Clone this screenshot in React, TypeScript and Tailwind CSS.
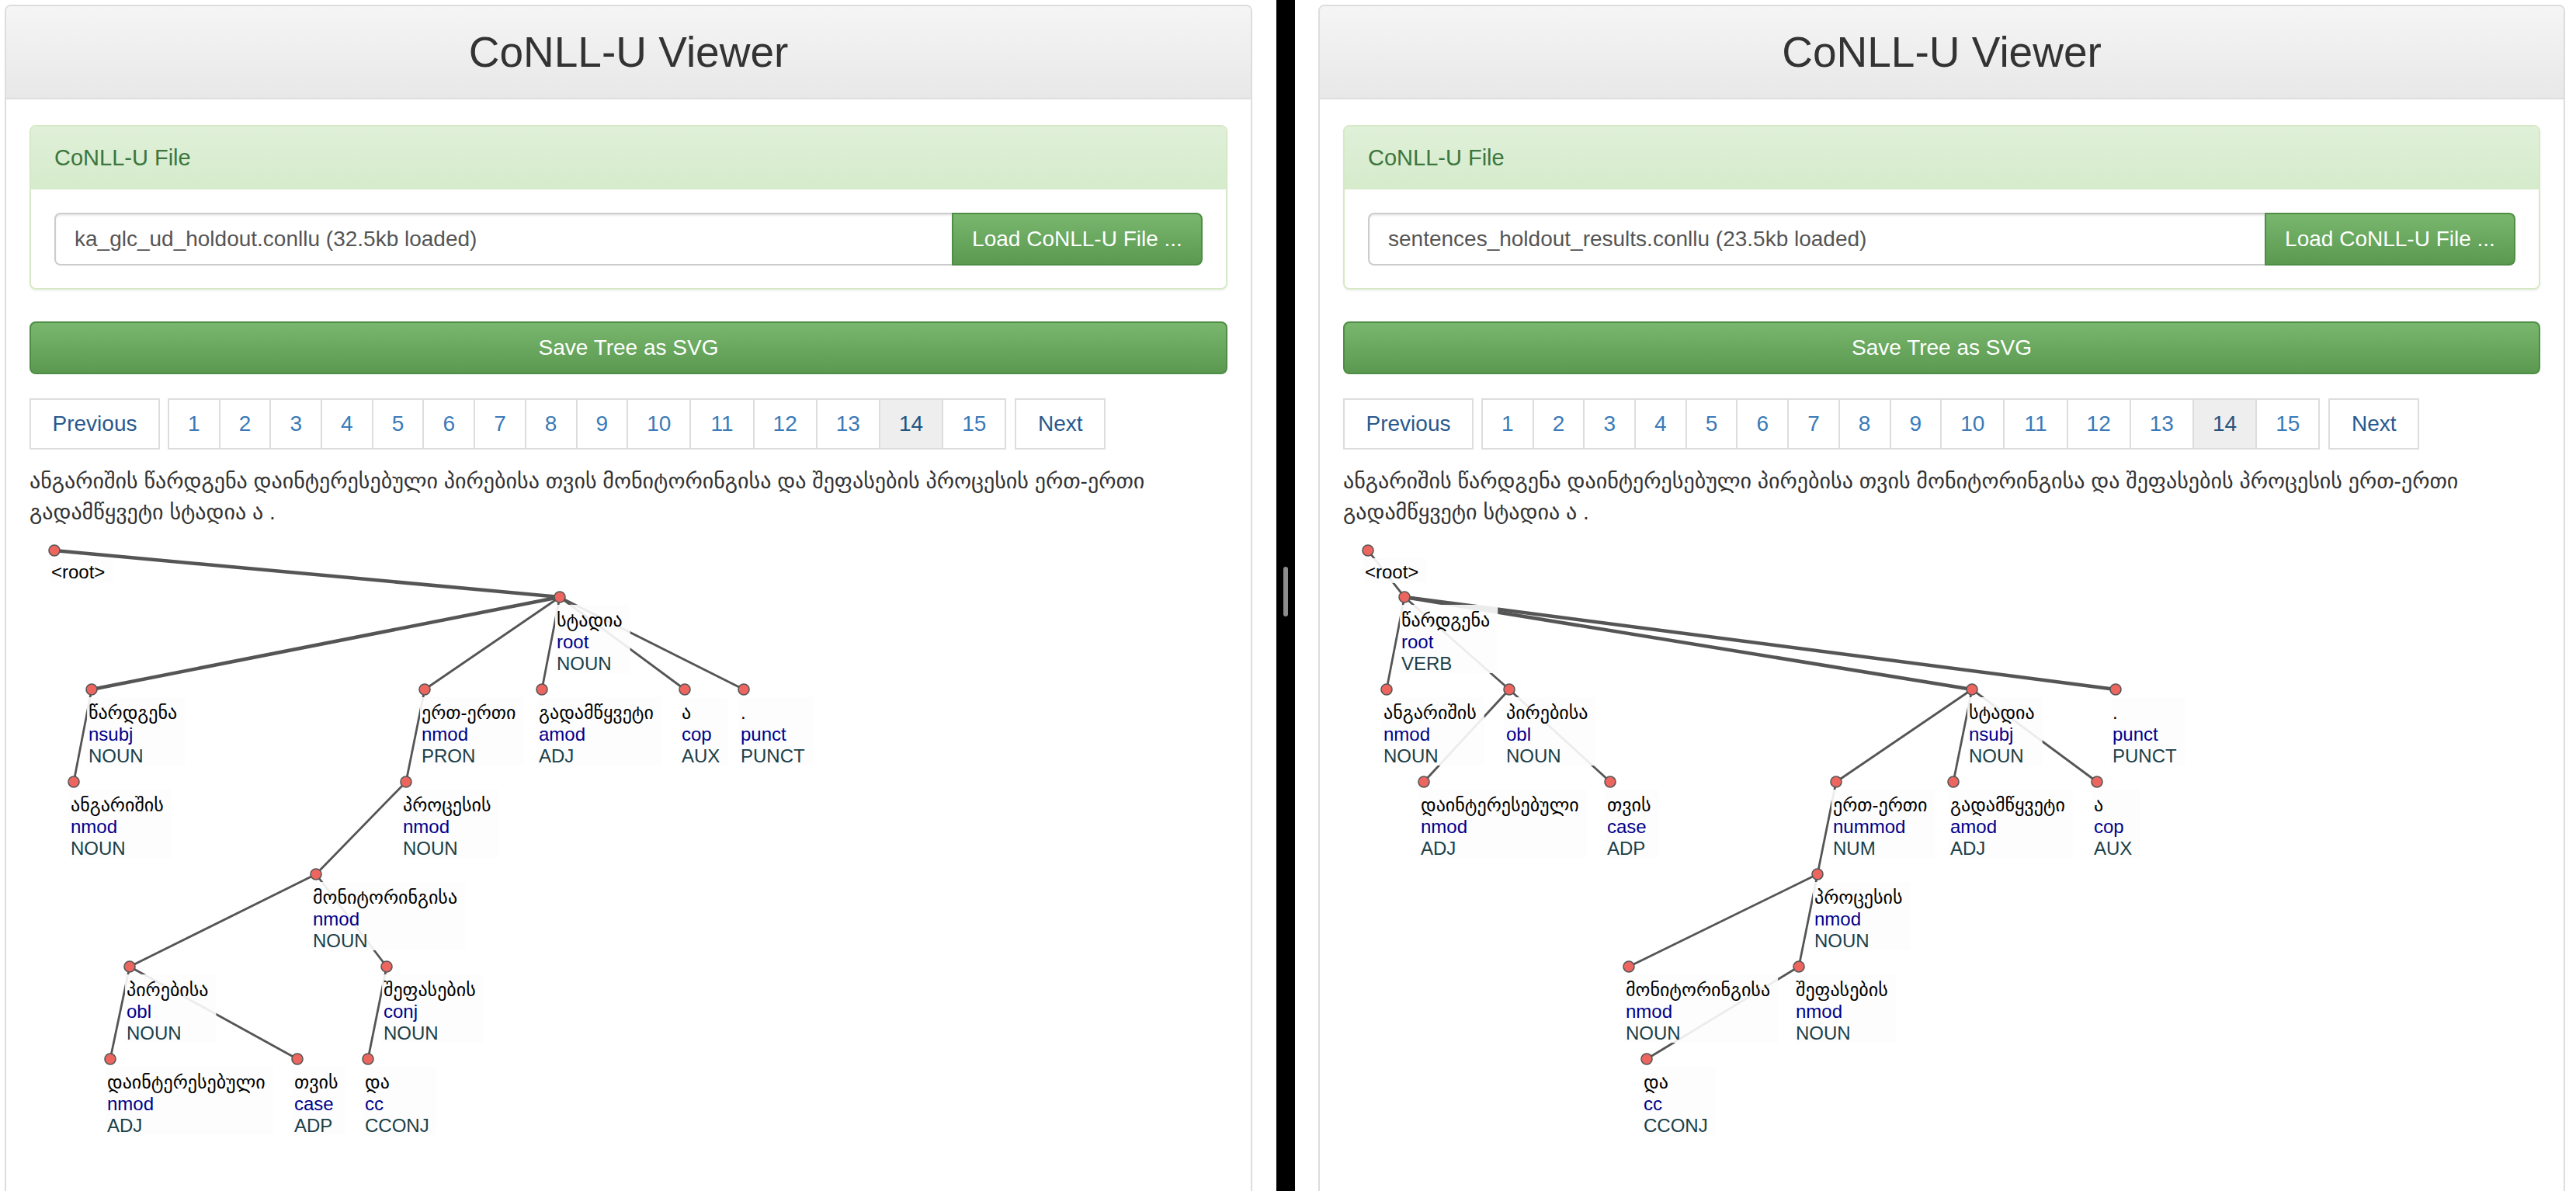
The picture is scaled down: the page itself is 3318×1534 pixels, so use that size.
import { useLayoutEffect, useRef, useState } from 'react'

type TreeNode = {
  id: string
  x: number
  y: number
  word: string
  deprel?: string
  upos?: string
}

type Edge = { from: string; to: string; thick?: boolean }

type ViewerData = {
  padLeft: string
  panelWidth: string
  fileName: string
  nodes: TreeNode[]
  edges: Edge[]
}

const sentenceLine1 =
  'ანგარიშის წარდგენა დაინტერესებული პირებისა თვის მონიტორინგისა და შეფასების პროცესის ერთ-ერთი'
const sentenceLine2 = 'გადამწყვეტი სტადია ა .'

const leftNodes: TreeNode[] = [
  { id: 'root', x: 32, y: 19, word: '<root>' },
  { id: 'stadia', x: 683, y: 79, word: 'სტადია', deprel: 'root', upos: 'NOUN' },
  { id: 'tsardgena', x: 80, y: 198, word: 'წარდგენა', deprel: 'nsubj', upos: 'NOUN' },
  { id: 'ert', x: 509, y: 198, word: 'ერთ-ერთი', deprel: 'nmod', upos: 'PRON' },
  { id: 'gadam', x: 660, y: 198, word: 'გადამწყვეტი', deprel: 'amod', upos: 'ADJ' },
  { id: 'a', x: 844, y: 198, word: 'ა', deprel: 'cop', upos: 'AUX' },
  { id: 'dot', x: 920, y: 198, word: '.', deprel: 'punct', upos: 'PUNCT' },
  { id: 'angar', x: 57, y: 317, word: 'ანგარიშის', deprel: 'nmod', upos: 'NOUN' },
  { id: 'protses', x: 485, y: 317, word: 'პროცესის', deprel: 'nmod', upos: 'NOUN' },
  { id: 'monit', x: 369, y: 436, word: 'მონიტორინგისა', deprel: 'nmod', upos: 'NOUN' },
  { id: 'pireb', x: 129, y: 555, word: 'პირებისა', deprel: 'obl', upos: 'NOUN' },
  { id: 'shef', x: 460, y: 555, word: 'შეფასების', deprel: 'conj', upos: 'NOUN' },
  { id: 'daint', x: 104, y: 674, word: 'დაინტერესებული', deprel: 'nmod', upos: 'ADJ' },
  { id: 'tvis', x: 345, y: 674, word: 'თვის', deprel: 'case', upos: 'ADP' },
  { id: 'da', x: 436, y: 674, word: 'და', deprel: 'cc', upos: 'CCONJ' },
]

const leftEdges: Edge[] = [
  { from: 'root', to: 'stadia', thick: true },
  { from: 'stadia', to: 'tsardgena', thick: true },
  { from: 'stadia', to: 'ert' },
  { from: 'stadia', to: 'gadam' },
  { from: 'stadia', to: 'a' },
  { from: 'stadia', to: 'dot' },
  { from: 'tsardgena', to: 'angar' },
  { from: 'ert', to: 'protses' },
  { from: 'protses', to: 'monit' },
  { from: 'monit', to: 'pireb' },
  { from: 'monit', to: 'shef' },
  { from: 'pireb', to: 'daint' },
  { from: 'pireb', to: 'tvis' },
  { from: 'shef', to: 'da' },
]

const rightNodes: TreeNode[] = [
  { id: 'root', x: 32, y: 19, word: '<root>' },
  { id: 'tsardgena', x: 79, y: 79, word: 'წარდგენა', deprel: 'root', upos: 'VERB' },
  { id: 'angar', x: 56, y: 198, word: 'ანგარიშის', deprel: 'nmod', upos: 'NOUN' },
  { id: 'pireb', x: 214, y: 198, word: 'პირებისა', deprel: 'obl', upos: 'NOUN' },
  { id: 'stadia', x: 810, y: 198, word: 'სტადია', deprel: 'nsubj', upos: 'NOUN' },
  { id: 'dot', x: 995, y: 198, word: '.', deprel: 'punct', upos: 'PUNCT' },
  { id: 'daint', x: 104, y: 317, word: 'დაინტერესებული', deprel: 'nmod', upos: 'ADJ' },
  { id: 'tvis', x: 344, y: 317, word: 'თვის', deprel: 'case', upos: 'ADP' },
  { id: 'ert', x: 635, y: 317, word: 'ერთ-ერთი', deprel: 'nummod', upos: 'NUM' },
  { id: 'gadam', x: 786, y: 317, word: 'გადამწყვეტი', deprel: 'amod', upos: 'ADJ' },
  { id: 'a', x: 971, y: 317, word: 'ა', deprel: 'cop', upos: 'AUX' },
  { id: 'protses', x: 611, y: 436, word: 'პროცესის', deprel: 'nmod', upos: 'NOUN' },
  { id: 'monit', x: 368, y: 555, word: 'მონიტორინგისა', deprel: 'nmod', upos: 'NOUN' },
  { id: 'shef', x: 587, y: 555, word: 'შეფასების', deprel: 'nmod', upos: 'NOUN' },
  { id: 'da', x: 391, y: 674, word: 'და', deprel: 'cc', upos: 'CCONJ' },
]

const rightEdges: Edge[] = [
  { from: 'root', to: 'tsardgena' },
  { from: 'tsardgena', to: 'angar' },
  { from: 'tsardgena', to: 'pireb' },
  { from: 'tsardgena', to: 'stadia', thick: true },
  { from: 'tsardgena', to: 'dot', thick: true },
  { from: 'pireb', to: 'daint' },
  { from: 'pireb', to: 'tvis' },
  { from: 'stadia', to: 'ert' },
  { from: 'stadia', to: 'gadam' },
  { from: 'stadia', to: 'a' },
  { from: 'ert', to: 'protses' },
  { from: 'protses', to: 'monit' },
  { from: 'protses', to: 'shef' },
  { from: 'shef', to: 'da' },
]

const viewers: ViewerData[] = [
  {
    padLeft: 'pl-[6px] w-[1644px]',
    panelWidth: 'w-[1607px]',
    fileName: 'ka_glc_ud_holdout.conllu (32.5kb loaded)',
    nodes: leftNodes,
    edges: leftEdges,
  },
  {
    padLeft: 'pl-[30px] flex-1',
    panelWidth: 'w-[1606px]',
    fileName: 'sentences_holdout_results.conllu (23.5kb loaded)',
    nodes: rightNodes,
    edges: rightEdges,
  },
]

function NodeLabel({ node }: { node: TreeNode }) {
  const ref = useRef<SVGGElement>(null)
  const [width, setWidth] = useState(0)

  useLayoutEffect(() => {
    if (ref.current) setWidth(ref.current.getBBox().width)
  }, [])

  const full = Boolean(node.deprel)

  return (
    <g>
      <rect
        x={node.x - 6}
        y={node.y + 10}
        width={width + 12}
        height={full ? 88 : 32}
        fill="#fdfdfd"
        fillOpacity={0.9}
      />
      <g ref={ref}>
        <text x={node.x - 4} y={node.y + (full ? 38 : 36)} fill="#000">
          {node.word}
        </text>
        {full && (
          <>
            <text x={node.x - 4} y={node.y + 66} fill="#00008b">
              {node.deprel}
            </text>
            <text x={node.x - 4} y={node.y + 94} fill="#1a4048">
              {node.upos}
            </text>
          </>
        )}
      </g>
    </g>
  )
}

function DependencyTree({ nodes, edges }: { nodes: TreeNode[]; edges: Edge[] }) {
  const byId = Object.fromEntries(nodes.map((n) => [n.id, n]))

  return (
    <svg width="1543" height="850" className="mt-[10px] text-[24px]">
      {edges.map((edge) => {
        const a = byId[edge.from]
        const b = byId[edge.to]
        return (
          <line
            key={edge.from + edge.to}
            x1={a.x}
            y1={a.y}
            x2={b.x}
            y2={b.y}
            stroke="#555"
            strokeWidth={edge.thick ? 4.5 : 2.8}
          />
        )
      })}
      {nodes.map((node) => (
        <NodeLabel key={node.id} node={node} />
      ))}
      {nodes.map((node) => (
        <circle
          key={node.id}
          cx={node.x}
          cy={node.y}
          r={7}
          fill="#ec665f"
          stroke="#555"
          strokeWidth={1.6}
        />
      ))}
    </svg>
  )
}

function Pagination() {
  const pages = Array.from({ length: 15 }, (_, i) => i + 1)

  return (
    <div className="mt-[31px] flex h-[66px] text-[28px]">
      <div className="flex w-[168px] items-center justify-center border-2 border-[#ddd] text-[#28598d]">
        Previous
      </div>
      <div className="ml-[10px] flex border-2 border-[#ddd]">
        {pages.map((page) => (
          <div
            key={page}
            className={[
              'flex items-center justify-center',
              page === 1 ? 'w-[63.7px]' : 'border-l-2 border-[#ddd]',
              page > 1 && page < 10 ? 'w-[65.7px]' : '',
              page >= 10 ? 'w-[81.2px]' : '',
              page === 14 ? 'bg-[#eee] text-[#23527c]' : 'text-[#3a7ab8]',
            ].join(' ')}
          >
            {page}
          </div>
        ))}
      </div>
      <div className="ml-[11px] flex w-[117px] items-center justify-center border-2 border-[#ddd] text-[#28598d]">
        Next
      </div>
    </div>
  )
}

function Viewer({ data }: { data: ViewerData }) {
  return (
    <div className={`${data.padLeft} h-full pt-[6px]`}>
      <div
        className={`${data.panelWidth} h-[1600px] rounded-t-[8px] border-2 border-[#ddd] bg-white`}
      >
        <div className="flex h-[120px] items-center justify-center rounded-t-[6px] border-b-2 border-[#ddd] bg-gradient-to-b from-[#f5f5f5] to-[#e8e8e8]">
          <h1 className="text-[55px] leading-none text-[#333]">CoNLL-U Viewer</h1>
        </div>

        <div className="px-[30px] pt-[33px]">
          <div className="rounded-[8px] border-2 border-[#d6e9c6] shadow-[0_2px_3px_rgba(0,0,0,0.05)]">
            <div className="flex h-[81px] items-center rounded-t-[6px] bg-gradient-to-b from-[#e0f0d9] to-[#d5ebcb] px-[30px] text-[29px] text-[#3c763d]">
              CoNLL-U File
            </div>
            <div className="px-[30px] pb-[29px] pt-[30px]">
              <div className="flex h-[68px]">
                <div className="flex flex-1 items-center rounded-l-[8px] border-2 border-r-0 border-[#ccc] px-[24px] text-[28px] text-[#555] shadow-[inset_0_2px_2px_rgba(0,0,0,0.075)]">
                  {data.fileName}
                </div>
                <div className="flex w-[323px] items-center justify-center rounded-r-[8px] border-2 border-[#4f8d46] bg-gradient-to-b from-[#78b76d] to-[#5a994f] text-[28px] text-white">
                  Load CoNLL-U File ...
                </div>
              </div>
            </div>
          </div>

          <div className="mt-[41px] flex h-[68px] items-center justify-center rounded-[8px] border-2 border-[#4f8d46] bg-gradient-to-b from-[#78b76d] to-[#5a994f] text-[28px] text-white">
            Save Tree as SVG
          </div>

          <Pagination />

          <p className="mt-[21px] text-[28px] leading-[40px] text-[#333]">
            {sentenceLine1}
            <br />
            {sentenceLine2}
          </p>

          <DependencyTree nodes={data.nodes} edges={data.edges} />
        </div>
      </div>
    </div>
  )
}

export default function App() {
  return (
    <div className="flex h-[1534px] w-[3318px] overflow-hidden bg-white font-[Liberation_Sans,DejaVu_Sans,Arial,sans-serif]">
      <Viewer data={viewers[0]} />
      <div className="flex w-[24px] shrink-0 justify-center bg-black pt-[730px]">
        <div className="h-[64px] w-[6px] rounded-full bg-[#8c8c8c]" />
      </div>
      <Viewer data={viewers[1]} />
    </div>
  )
}
